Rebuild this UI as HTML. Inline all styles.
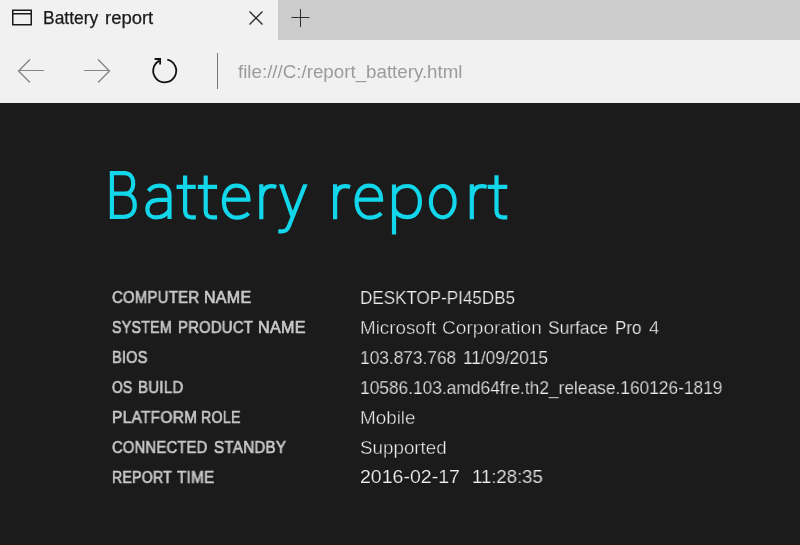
<!DOCTYPE html>
<html><head><meta charset="utf-8">
<style>
html,body{margin:0;padding:0;}
body{width:800px;height:545px;overflow:hidden;position:relative;background:#1b1b1b;font-family:"Liberation Sans",sans-serif;}
.abs{position:absolute;white-space:nowrap;line-height:1;transform-origin:0 0;-webkit-font-smoothing:antialiased;will-change:transform;}
#tabbar{position:absolute;left:0;top:0;width:800px;height:40px;background:#cccccc;}
#tab{position:absolute;left:0;top:0;width:278px;height:40px;background:#f1f1f1;}
#nav{position:absolute;left:0;top:40px;width:800px;height:63px;background:#f1f1f1;}
#content{position:absolute;left:0;top:103px;width:800px;height:442px;background:#1b1b1b;}
</style></head><body>
<div id="tabbar"></div>
<div id="tab"></div>
<div id="nav"></div>
<div id="content"></div>

<svg style="position:absolute;left:0;top:0" width="800" height="103" viewBox="0 0 800 103">
  <rect x="12.75" y="10.25" width="18.5" height="14.5" fill="none" stroke="#1a1a1a" stroke-width="1.5"/>
  <line x1="12" y1="13.75" x2="32" y2="13.75" stroke="#1a1a1a" stroke-width="1.5"/>
  <path d="M249.5 11.5 L262.5 24.5 M262.5 11.5 L249.5 24.5" stroke="#2e2e2e" stroke-width="1.4" fill="none"/>
  <path d="M300.5 9 V27 M291.5 17.5 H309.5" stroke="#2e2e2e" stroke-width="1" fill="none"/>
  <path d="M30 59.5 L18.5 71 L30 82.5" stroke="#858585" stroke-width="1.35" fill="none"/>
  <path d="M19 70.5 H44" stroke="#858585" stroke-width="1" fill="none"/>
  <path d="M98 59.5 L109.5 71 L98 82.5" stroke="#858585" stroke-width="1.35" fill="none"/>
  <path d="M84 70.5 H109" stroke="#858585" stroke-width="1" fill="none"/>
  <path d="M167.3 59.6 A11.5 11.5 0 1 1 159.4 60.6" stroke="#111" stroke-width="1.8" fill="none"/>
  <path d="M154.6 59 H160.1 V64.6" stroke="#111" stroke-width="1.8" fill="none" stroke-linejoin="miter"/>
  <rect x="217" y="53" width="1" height="36" fill="#7a7a7a"/>
</svg>
<div class="abs" id="tabtxt" style="left:43.26px;top:9.97px;font-size:17.46px;font-weight:normal;color:#1a1a1a;transform:scale(0.9936,1.0000);-webkit-text-stroke:0.25px #1a1a1a;">Battery</div>
<div class="abs" id="tabtxt2" style="left:104.54px;top:9.97px;font-size:17.46px;font-weight:normal;color:#1a1a1a;transform:scale(1.0589,1.0000);-webkit-text-stroke:0.25px #1a1a1a;">report</div>
<div class="abs" id="url" style="left:238.40px;top:63.87px;font-size:17.88px;font-weight:normal;color:#9b9b9b;transform:scale(1.0488,1.0000);">file:///C:/report_battery.html</div>
<div class="abs" id="l1a" style="left:112.20px;top:290.16px;font-size:15.64px;font-weight:normal;color:#c8c8c8;transform:scale(0.9516,1.0000);letter-spacing:0.3px;-webkit-text-stroke:0.65px #c8c8c8;">COMPUTER</div>
<div class="abs" id="l1b" style="left:203.88px;top:290.16px;font-size:15.64px;font-weight:normal;color:#c8c8c8;transform:scale(1.0244,1.0000);letter-spacing:0.3px;-webkit-text-stroke:0.65px #c8c8c8;">NAME</div>
<div class="abs" id="l2a" style="left:112.00px;top:320.16px;font-size:15.64px;font-weight:normal;color:#c8c8c8;transform:scale(0.9077,1.0000);letter-spacing:0.3px;-webkit-text-stroke:0.65px #c8c8c8;">SYSTEM</div>
<div class="abs" id="l2b" style="left:177.55px;top:320.16px;font-size:15.64px;font-weight:normal;color:#c8c8c8;transform:scale(0.9462,1.0000);letter-spacing:0.3px;-webkit-text-stroke:0.65px #c8c8c8;">PRODUCT</div>
<div class="abs" id="l2c" style="left:257.77px;top:320.16px;font-size:15.64px;font-weight:normal;color:#c8c8c8;transform:scale(1.0333,1.0000);letter-spacing:0.3px;-webkit-text-stroke:0.65px #c8c8c8;">NAME</div>
<div class="abs" id="l3a" style="left:111.57px;top:350.16px;font-size:15.64px;font-weight:normal;color:#c8c8c8;transform:scale(0.9270,1.0000);letter-spacing:0.3px;-webkit-text-stroke:0.65px #c8c8c8;">BIOS</div>
<div class="abs" id="l4a" style="left:112.00px;top:380.16px;font-size:15.64px;font-weight:normal;color:#c8c8c8;transform:scale(0.8783,1.0000);letter-spacing:0.3px;-webkit-text-stroke:0.65px #c8c8c8;">OS</div>
<div class="abs" id="l4b" style="left:137.79px;top:380.16px;font-size:15.64px;font-weight:normal;color:#c8c8c8;transform:scale(0.9576,1.0000);letter-spacing:0.3px;-webkit-text-stroke:0.65px #c8c8c8;">BUILD</div>
<div class="abs" id="l5a" style="left:111.51px;top:410.16px;font-size:15.64px;font-weight:normal;color:#c8c8c8;transform:scale(0.9881,1.0000);letter-spacing:0.3px;-webkit-text-stroke:0.65px #c8c8c8;">PLATFORM</div>
<div class="abs" id="l5b" style="left:201.09px;top:410.16px;font-size:15.64px;font-weight:normal;color:#c8c8c8;transform:scale(0.9095,1.0000);letter-spacing:0.3px;-webkit-text-stroke:0.65px #c8c8c8;">ROLE</div>
<div class="abs" id="l6a" style="left:112.00px;top:440.16px;font-size:15.64px;font-weight:normal;color:#c8c8c8;transform:scale(0.9406,1.0000);letter-spacing:0.3px;-webkit-text-stroke:0.65px #c8c8c8;">CONNECTED</div>
<div class="abs" id="l6b" style="left:213.50px;top:440.16px;font-size:15.64px;font-weight:normal;color:#c8c8c8;transform:scale(0.9667,1.0000);letter-spacing:0.3px;-webkit-text-stroke:0.65px #c8c8c8;">STANDBY</div>
<div class="abs" id="l7a" style="left:111.60px;top:470.16px;font-size:15.64px;font-weight:normal;color:#c8c8c8;transform:scale(0.9015,1.0000);letter-spacing:0.3px;-webkit-text-stroke:0.65px #c8c8c8;">REPORT</div>
<div class="abs" id="l7b" style="left:177.00px;top:470.16px;font-size:15.64px;font-weight:normal;color:#c8c8c8;transform:scale(0.9737,1.0000);letter-spacing:0.3px;-webkit-text-stroke:0.65px #c8c8c8;">TIME</div>
<div class="abs" id="v1a" style="left:360.29px;top:288.96px;font-size:18.72px;font-weight:normal;color:#eeeeee;transform:scale(0.9112,1.0000);-webkit-text-stroke:0.22px #1b1b1b;">DESKTOP-PI45DB5</div>
<div class="abs" id="v2a" style="left:360.20px;top:318.96px;font-size:18.72px;font-weight:normal;color:#eeeeee;transform:scale(1.0040,1.0000);-webkit-text-stroke:0.41px #1b1b1b;">Microsoft</div>
<div class="abs" id="v2b" style="left:442.48px;top:318.96px;font-size:18.72px;font-weight:normal;color:#eeeeee;transform:scale(1.0219,1.0000);-webkit-text-stroke:0.44px #1b1b1b;">Corporation</div>
<div class="abs" id="v2c" style="left:548.47px;top:318.96px;font-size:18.72px;font-weight:normal;color:#eeeeee;transform:scale(0.9302,1.0000);-webkit-text-stroke:0.26px #1b1b1b;">Surface</div>
<div class="abs" id="v2d" style="left:615.34px;top:318.96px;font-size:18.72px;font-weight:normal;color:#eeeeee;transform:scale(0.9054,1.0000);-webkit-text-stroke:0.21px #1b1b1b;">Pro</div>
<div class="abs" id="v2e" style="left:648.60px;top:318.96px;font-size:18.72px;font-weight:normal;color:#eeeeee;transform:scale(0.9900,1.0000);-webkit-text-stroke:0.38px #1b1b1b;">4</div>
<div class="abs" id="v3a" style="left:360.28px;top:348.96px;font-size:18.72px;font-weight:normal;color:#eeeeee;transform:scale(0.9245,1.0000);-webkit-text-stroke:0.25px #1b1b1b;">103.873.768</div>
<div class="abs" id="v3b" style="left:462.58px;top:348.96px;font-size:18.72px;font-weight:normal;color:#eeeeee;transform:scale(0.9220,1.0000);-webkit-text-stroke:0.24px #1b1b1b;">11/09/2015</div>
<div class="abs" id="v4a" style="left:360.27px;top:378.96px;font-size:18.72px;font-weight:normal;color:#eeeeee;transform:scale(0.9270,1.0000);-webkit-text-stroke:0.25px #1b1b1b;">10586.103.amd64fre.th2_release.160126-1819</div>
<div class="abs" id="v5a" style="left:360.19px;top:408.96px;font-size:18.72px;font-weight:normal;color:#eeeeee;transform:scale(1.0074,1.0000);-webkit-text-stroke:0.41px #1b1b1b;">Mobile</div>
<div class="abs" id="v6a" style="left:360.20px;top:438.96px;font-size:18.72px;font-weight:normal;color:#eeeeee;transform:scale(1.0048,1.0000);-webkit-text-stroke:0.41px #1b1b1b;">Supported</div>
<div class="abs" id="v7" style="left:360.16px;top:468.06px;font-size:18.72px;font-weight:normal;color:#f0f0f0;transform:scale(1.0447,1.0000);-webkit-text-stroke:0.2px #1b1b1b;">2016-02-17</div>
<div class="abs" id="v8" style="left:472.01px;top:468.06px;font-size:18.72px;font-weight:normal;color:#f0f0f0;transform:scale(0.9914,1.0000);-webkit-text-stroke:0.2px #1b1b1b;">11:28:35</div>
<svg style="position:absolute;left:0;top:0" width="800" height="545" viewBox="0 0 800 545">
<defs><clipPath id="yclip"><rect x="270" y="184.2" width="50" height="60"/></clipPath></defs>
<g fill="none" stroke="#12d7ea" stroke-width="4.2" stroke-linejoin="miter" stroke-linecap="butt">
  <path d="M111.9 193.7 H124.5 C130 193.7 133.2 189.5 133.2 183.45 C133.2 177.4 130 173.2 124.5 173.2 H111.9 V216.8 H124 C130.5 216.8 134.8 212.5 134.8 205.25 C134.8 198 130.5 193.7 124 193.7"/>
  <path d="M148.5 190.9 C151.2 187.3 155 185.6 159.5 185.6 C166 185.6 169.5 189.2 169.5 196 V219"/>
  <path d="M169.5 199.9 H160 C151.5 199.9 147.4 203.5 147.4 209.3 C147.4 214.4 151 217.4 156 217.4 C162 217.4 166.5 214.6 169.5 210.5"/>
  <path d="M185.1 175.5 V210.5 C185.1 215.3 187.6 217.3 191.5 217.3 H195.8 M176.5 186.8 H195.8"/>
  <path d="M205.7 175.5 V210.5 C205.7 215.3 208.2 217.3 212.1 217.3 H217.1 M197.8 186.8 H217.1"/>
  <path id="e1" d="M224 199.7 H248.4 C248.4 190.8 243.6 185.6 236.4 185.6 C228.6 185.6 223.9 192.2 223.9 201.6 C223.9 211.2 229 217.7 237.2 217.7 C241.8 217.7 245.4 216.3 248.6 213.3"/>
  <path id="r1" d="M261.3 219.2 V184.3 M261.3 197 C262.3 190 265.8 186.2 271.5 186.2 C273.2 186.2 274.8 186.5 276.3 187"/>
  <path clip-path="url(#yclip)" d="M279.9 180.4 L292.6 216.8 M306.9 180.4 L289 226 C287.1 230.8 284.7 231.4 281.5 231.4 H278.3"/>
  <use href="#r1" x="73.8"/>
  <use href="#e1" x="132.7"/>
  <path d="M394 184.5 V234.6 M394 194.5 C396.6 189 401 186 407.2 186 C415.2 186 419.9 192.6 419.9 201.6 C419.9 210.8 415.2 217.2 407.2 217.2 C401 217.2 396.6 214.4 394 209"/>
  <ellipse cx="442.75" cy="201.65" rx="11.85" ry="15.65"/>
  <use href="#r1" x="210.5"/>
  <path d="M496.5 175.2 V210.5 C496.5 215.3 499 217.3 502.9 217.3 H507.3 M487.7 186.8 H507.3"/>
</g>
</svg>

</body></html>
